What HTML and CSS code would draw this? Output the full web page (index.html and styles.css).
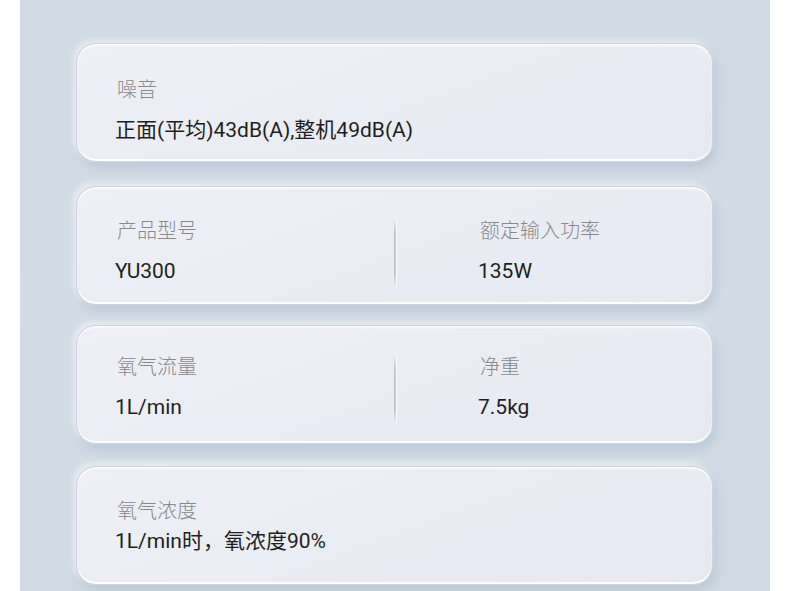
FILE: index.html
```html
<!DOCTYPE html>
<html lang="zh-CN">
<head>
<meta charset="utf-8">
<title>产品参数</title>
<link rel="stylesheet" href="styles.css">
</head>
<body>
  <main class="panel">
    <section class="card card--noise">
      <div class="field">
        <div class="label">噪音</div>
        <div class="value">正面(平均)43dB(A),整机49dB(A)</div>
      </div>
    </section>

    <section class="card card--split card--model">
      <div class="field">
        <div class="label">产品型号</div>
        <div class="value">YU300</div>
      </div>
      <div class="divider"></div>
      <div class="field field--right">
        <div class="label">额定输入功率</div>
        <div class="value">135W</div>
      </div>
    </section>

    <section class="card card--split card--flow">
      <div class="field">
        <div class="label">氧气流量</div>
        <div class="value">1L/min</div>
      </div>
      <div class="divider"></div>
      <div class="field field--right">
        <div class="label">净重</div>
        <div class="value">7.5kg</div>
      </div>
    </section>

    <section class="card card--conc">
      <div class="field field--tight">
        <div class="label">氧气浓度</div>
        <div class="value">1L/min时，氧浓度90%</div>
      </div>
    </section>
  </main>
</body>
</html>
```

FILE: styles.css
```css
* { box-sizing: border-box; }

html, body {
  margin: 0;
  padding: 0;
  background: #ffffff;
  height: 591px;
  overflow: hidden;
}

body {
  font-family: Roboto, "Noto Sans CJK SC", sans-serif;
}

.panel {
  margin-left: 20px;
  width: 750px;
  height: 591px;
  background: linear-gradient(180deg, #cfdae4 0%, #d2dce6 50%, #cfdae4 100%);
  padding: 43px 0 0 56px;
  display: flex;
  flex-direction: column;
}

.card {
  width: 637px;
  height: 119px;
  border-radius: 20px;
  background: linear-gradient(160deg, #eeeff7 0%, #ebedf5 45%, #e6e9f2 100%);
  border: 1px solid #d0d4de;
  box-shadow:
    -3px -3px 6px rgba(255, 255, 255, 0.55),
    3px 6px 10px rgba(150, 168, 190, 0.35),
    inset 0 -2px 0 rgba(255, 255, 255, 0.95),
    inset 0 2px 2px rgba(255, 255, 255, 0.8);
  padding: 31px 38px 0 38px;
}

.card--noise { padding-top: 32px; margin-bottom: 24px; }
.card--model { padding-top: 30px; margin-bottom: 20px; }
.card--flow { padding-top: 27px; margin-bottom: 22px; }
.card--conc { padding-top: 30px; }

.card--split {
  display: grid;
  grid-template-columns: 279px 2px 1fr;
  align-items: stretch;
}

.field {
  display: flex;
  flex-direction: column;
  gap: 12px;
}

.field--right { padding-left: 82px; }
.field--tight { gap: 2px; }

.label {
  font-size: 20px;
  line-height: 28px;
  color: #89898c;
  font-weight: 300;
  padding-left: 2px;
}

.value {
  font-size: 21px;
  line-height: 28px;
  color: #1f1f22;
}

.divider {
  width: 2px;
  margin: 2px 0 0;
  height: 68px;
  background: linear-gradient(180deg, rgba(190,194,204,0) 0%, #c4c8d1 20%, #c4c8d1 80%, rgba(190,194,204,0) 100%);
  box-shadow: 1px 0 0 rgba(255,255,255,0.8);
}
```
